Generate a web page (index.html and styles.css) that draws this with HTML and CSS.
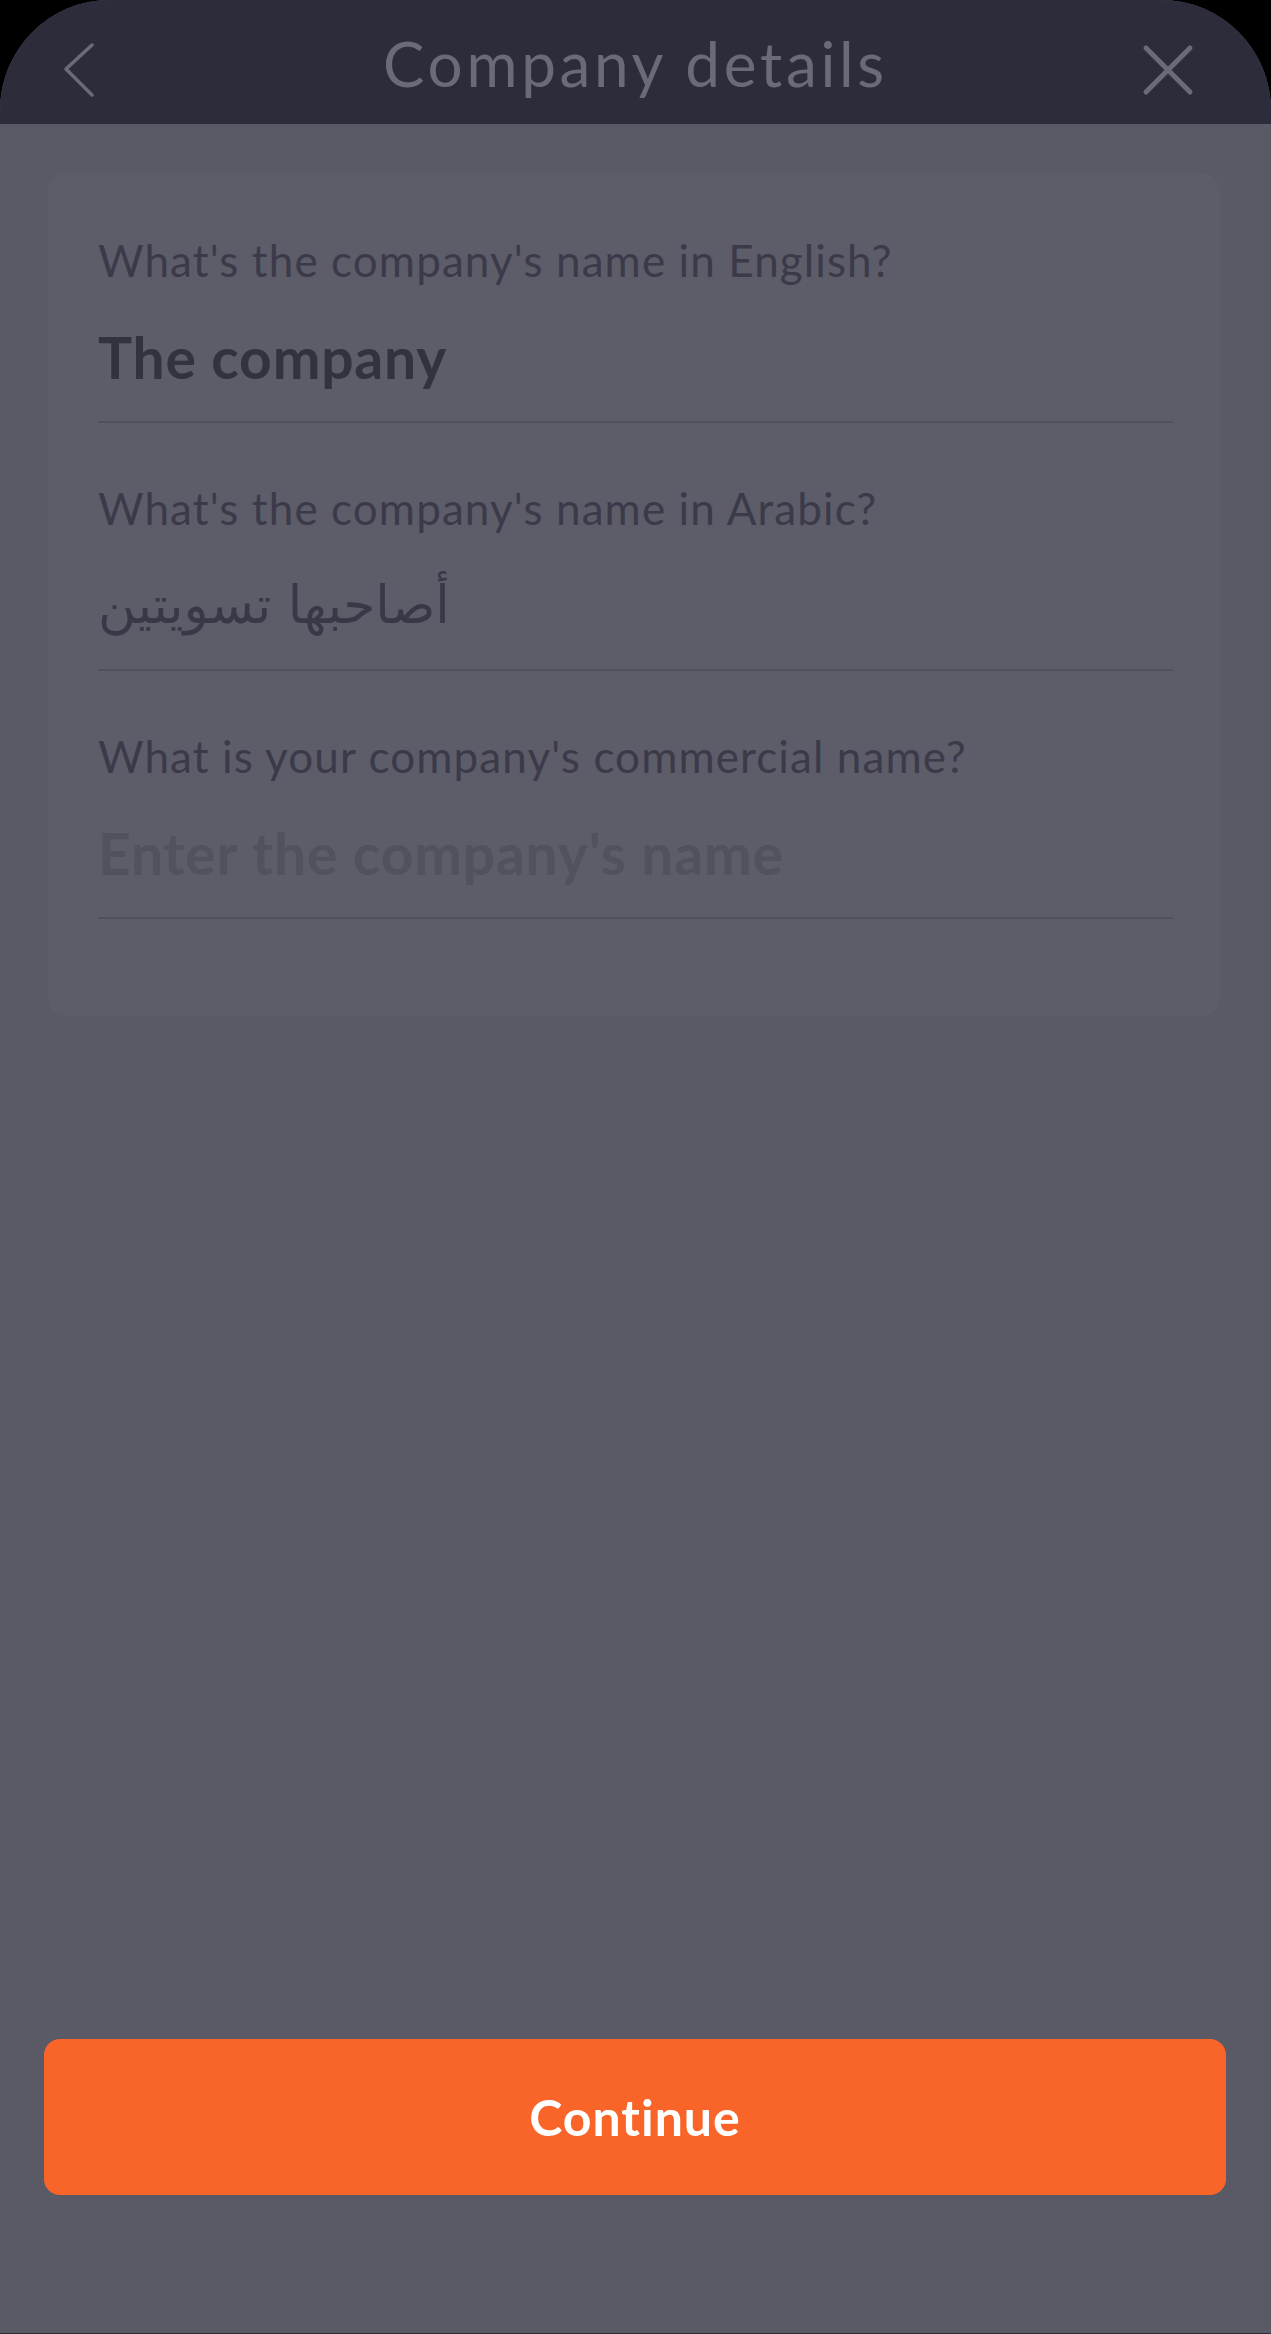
FILE: index.html
```html
<!DOCTYPE html>
<html lang="en">
<head>
<meta charset="utf-8">
<title>Company details</title>
<link rel="stylesheet" href="styles.css">
</head>
<body>
<div class="screen">
  <header class="header">
    <div class="hdr-left">
      <svg class="chev" width="34" height="56" viewBox="0 0 34 56">
        <polyline points="29,2 3,26 29,52" fill="none" stroke="#6b6a78" stroke-width="3.5" stroke-linecap="round" stroke-linejoin="round"/>
      </svg>
    </div>
    <h1 class="title">Company details</h1>
    <div class="hdr-right">
      <svg class="close" width="52" height="52" viewBox="0 0 52 52">
        <path d="M4 4 L48 48 M48 4 L4 48" fill="none" stroke="#6b6a78" stroke-width="5" stroke-linecap="round"/>
      </svg>
    </div>
  </header>
  <main class="content">
    <section class="card">
      <div class="field">
        <div class="label">What's the company's name in English?</div>
        <div class="value">The company</div>
      </div>
      <div class="field">
        <div class="label">What's the company's name in Arabic?</div>
        <div class="value arabic"><span lang="ar">أصاحبها تسويتين</span></div>
      </div>
      <div class="field">
        <div class="label">What is your company's commercial name?</div>
        <div class="value placeholder">Enter the company's name</div>
      </div>
    </section>
  </main>
  <footer class="footer">
    <button class="btn">Continue</button>
  </footer>
</div>
</body>
</html>
```
FILE: styles.css
```css
html, body {
  margin: 0;
  padding: 0;
  background: #000;
}
body {
  width: 1271px;
  height: 2334px;
  overflow: hidden;
  font-family: "Lato", "DejaVu Sans", sans-serif;
}
.screen {
  width: 1271px;
  height: 2333px;
  background: #5a5966;
  border-radius: 110px 110px 0 0;
  overflow: hidden;
  display: flex;
  flex-direction: column;
  border-bottom: 1px solid #2d2c3b;
}
.header {
  height: 124px;
  flex: 0 0 124px;
  background: #2d2c3b;
  display: grid;
  grid-template-columns: 1fr auto 1fr;
  align-items: start;
}
.hdr-left {
  padding-top: 43px;
  padding-left: 63px;
}
.hdr-right {
  padding-top: 44px;
  padding-right: 77px;
  display: flex;
  justify-content: flex-end;
}
.chev, .close { display: block; }
.title {
  margin: 0;
  padding-top: 26px;
  font-size: 62px;
  line-height: 74px;
  font-weight: 400;
  color: #6b6a78;
  letter-spacing: 3.7px;
}
.content {
  flex: 1 1 auto;
  padding: 49px 51px 0 48px;
}
.card {
  background: #5d5c69;
  border-radius: 18px;
  padding: 61px 47px 97px 50px;
}
.field {
  border-bottom: 2px solid #51505d;
  padding-bottom: 30px;
}
.field + .field {
  margin-top: 59px;
}
.label {
  font-size: 44px;
  line-height: 52px;
  color: #3b3a49;
  letter-spacing: 1.1px;
}
.value {
  margin-top: 37px;
  font-size: 57px;
  line-height: 68px;
  font-weight: 700;
  color: #33323f;
  white-space: nowrap;
  letter-spacing: 0.8px;
}
.value.arabic {
  font-family: "DejaVu Sans", sans-serif;
  font-weight: 400;
  font-size: 52px;
  letter-spacing: 0;
  color: #393847;
}
.value.placeholder {
  color: #52515e;
}
.footer {
  flex: 0 0 auto;
  padding: 0 45px 138px 44px;
}
.btn {
  display: block;
  width: 100%;
  height: 156px;
  border: 0;
  border-radius: 16px;
  background: #f96529;
  color: #fff;
  font-family: "Lato", sans-serif;
  font-weight: 700;
  font-size: 50px;
  letter-spacing: 1px;
  padding: 0;
}
```
